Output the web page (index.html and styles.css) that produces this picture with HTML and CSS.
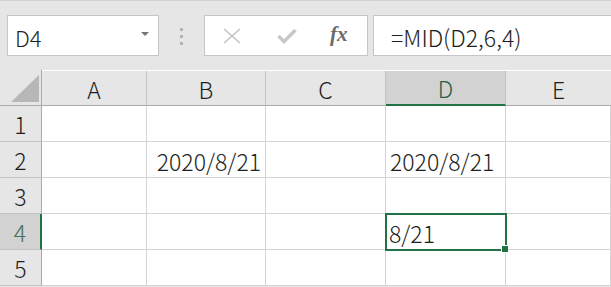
FILE: index.html
```html
<!DOCTYPE html>
<html lang="ja">
<head>
    <meta charset="UTF-8">
    <meta name="viewport" content="width=device-width, initial-scale=1.0">
    <title>MID</title>
    <link rel="stylesheet" href="styles.css">
</head>
<body>
    <div class="toolbar">
        <div class="name-box">
            <span>D4</span>
            <span class="arrow"></span>
        </div>
        <div class="grip"><i></i><i></i><i></i></div>
        <div class="buttons">
            <svg class="icon-x" width="18" height="16" viewBox="0 0 18 16">
                <path d="M1 1 L17 15 M17 1 L1 15" stroke="#c3c3c3" stroke-width="1.6" fill="none"/>
            </svg>
            <svg class="icon-check" width="20" height="16" viewBox="0 0 20 16">
                <path d="M1.5 8 L7 13.5 L18.5 2" stroke="#c8c8c8" stroke-width="3.4" fill="none"/>
            </svg>
            <span class="fx">fx</span>
        </div>
        <div class="formula">=MID(D2,6,4)</div>
    </div>

    <div class="sheet">
        <div class="corner">
            <svg width="28" height="27" viewBox="0 0 28 27">
                <polygon points="28,0 28,27 0,27" fill="#b7b7b7"/>
            </svg>
        </div>
        <div class="col-head">A</div>
        <div class="col-head">B</div>
        <div class="col-head">C</div>
        <div class="col-head active">D</div>
        <div class="col-head last">E</div>

        <div class="row-head">1</div>
        <div class="cell"></div>
        <div class="cell"></div>
        <div class="cell"></div>
        <div class="cell"></div>
        <div class="cell"></div>

        <div class="row-head">2</div>
        <div class="cell"></div>
        <div class="cell num">2020/8/21</div>
        <div class="cell"></div>
        <div class="cell">2020/8/21</div>
        <div class="cell"></div>

        <div class="row-head">3</div>
        <div class="cell"></div>
        <div class="cell"></div>
        <div class="cell"></div>
        <div class="cell"></div>
        <div class="cell"></div>

        <div class="row-head active">4</div>
        <div class="cell"></div>
        <div class="cell"></div>
        <div class="cell"></div>
        <div class="cell selected">8/21<span class="handle"></span></div>
        <div class="cell"></div>

        <div class="row-head">5</div>
        <div class="cell"></div>
        <div class="cell"></div>
        <div class="cell"></div>
        <div class="cell"></div>
        <div class="cell"></div>
    </div>
</body>
</html>
```

FILE: styles.css
```css
body {
    margin: 0;
    background-color: #e6e6e6;
    font-family: 'Noto Sans CJK JP', 'Noto Sans', sans-serif;
    font-weight: 300;
    color: #1e1e1e;
    overflow: hidden;
}
.toolbar {
    display: flex;
    align-items: stretch;
    height: 70px;
    padding: 14px 0 0 7px;
    box-sizing: border-box;
    border-top: 1px solid #d2d2d2;
}
.name-box,
.buttons,
.formula {
    height: 41px;
    box-sizing: border-box;
    background: white;
    border: 1px solid #c6c6c6;
}
.name-box {
    width: 152px;
    display: flex;
    align-items: center;
    justify-content: space-between;
    padding: 2px 9px 0 7px;
    font-size: 22px;
}
.arrow {
    width: 0;
    height: 0;
    border-left: 4px solid transparent;
    border-right: 4px solid transparent;
    border-top: 4px solid #777;
    margin-bottom: 6px;
}
.grip {
    width: 45px;
    display: flex;
    flex-direction: column;
    align-items: center;
    gap: 4px;
    padding-top: 13px;
    box-sizing: border-box;
    height: 41px;
}
.grip i {
    display: block;
    width: 3px;
    height: 3px;
    background: #b4b4b4;
}
.buttons {
    width: 164px;
    display: flex;
    align-items: center;
    padding: 0 0 0 18px;
}
.icon-x {
    margin-right: 36px;
}
.icon-check {
    margin-right: 33px;
}
.fx {
    font-family: 'Liberation Serif', serif;
    font-style: italic;
    font-weight: bold;
    font-size: 21px;
    color: #6a6a6a;
    margin-top: -2px;
}
.formula {
    flex: 1;
    margin-left: 5px;
    border-right: none;
    padding: 2px 0 0 17px;
    display: flex;
    align-items: center;
    font-size: 23px;
}
.sheet {
    display: grid;
    grid-template-columns: 42px 105px 119px 120px 120px 105px;
    grid-template-rows: 36px repeat(5, 36px);
    background: white;
}
.corner {
    background: #e6e6e6;
    border-right: 1px solid #ababab;
    border-bottom: 1px solid #ababab;
    display: flex;
    align-items: flex-end;
    justify-content: flex-end;
    padding: 0 2px 3px 0;
}
.col-head {
    background: #e6e6e6;
    border-right: 1px solid #c3c3c3;
    border-bottom: 1px solid #ababab;
    display: flex;
    align-items: center;
    justify-content: center;
    font-size: 23px;
    margin-top: 1px;
    padding-top: 1px;
}
.col-head.last {
    border-right: none;
}
.col-head.active {
    background: #d2d2d2;
    border-bottom: 2px solid #217346;
    color: #2a5e45;
}
.row-head {
    background: #e6e6e6;
    border-right: 1px solid #ababab;
    border-bottom: 1px solid #c3c3c3;
    display: flex;
    align-items: center;
    justify-content: center;
    font-size: 23px;
}
.row-head.active {
    background: #d2d2d2;
    border-right: 2px solid #217346;
    color: #4a6e5a;
}
.cell {
    position: relative;
    border-right: 1px solid #d4d4d4;
    border-bottom: 1px solid #d4d4d4;
    display: flex;
    align-items: center;
    padding: 2px 0 0 4px;
    font-size: 23px;
}
.cell.num {
    justify-content: flex-end;
    padding-right: 4px;
}
.cell.selected {
    outline: 2px solid #217346;
    outline-offset: -1px;
    padding-left: 3px;
    z-index: 1;
}
.handle {
    position: absolute;
    right: -4px;
    bottom: -4px;
    width: 6px;
    height: 6px;
    background: #217346;
    border: 1px solid white;
}
```
